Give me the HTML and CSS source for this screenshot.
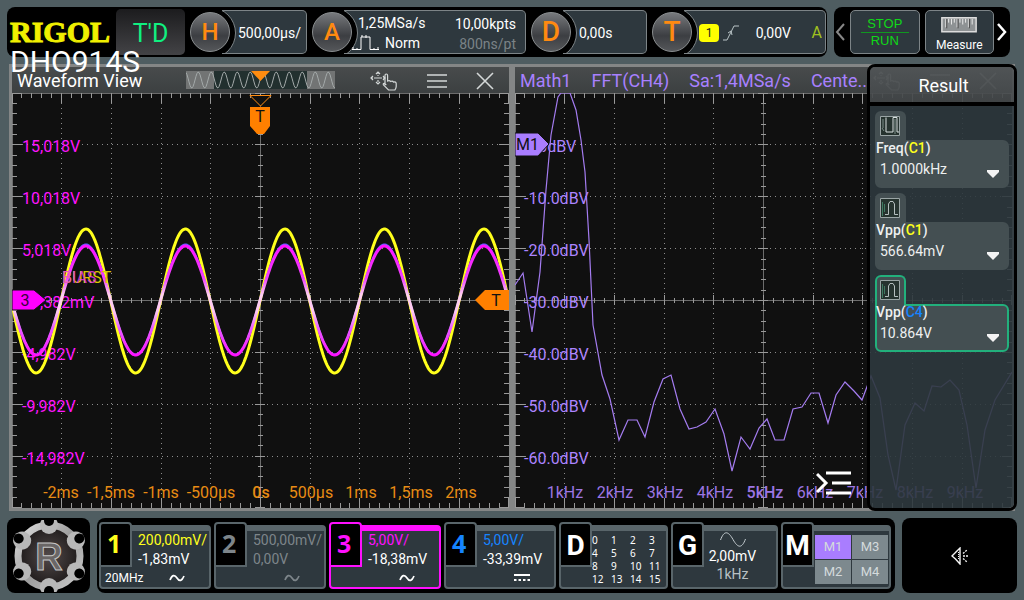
FILE: index.html
```html
<!DOCTYPE html>
<html lang="en">
<head>
<meta charset="utf-8">
<title>RIGOL DHO914S</title>
<link rel="stylesheet" href="styles.css">
</head>
<body>
<svg class="defs" aria-hidden="true">
  <symbol id="i-move" viewBox="0 0 28 20">
    <g fill="none" stroke="currentColor" stroke-width="1.2">
      <path d="M8 1v4M8 9v4M1 7h5M10 7h5" stroke-dasharray="2 1"/>
      <path d="M6 3l2-2 2 2M6 11l2 2 2-2M3 5L1 7l2 2M13 5l2 2-2 2M6 7h4"/>
      <path d="M15 14V4.500q0-1.500 1.300-1.500t1.300 1.500V10q2-1 3 .5 2-1 3 .6 2.400-.6 2.600 1.400v3q0 1.500-1.300 3.500H18.500l-5-5q-.8-1.500.8-1.700l2 1.700"/>
    </g>
  </symbol>
  <symbol id="i-menu" viewBox="0 0 20 16"><path d="M0 2h20M0 8h20M0 14h20" stroke="currentColor" stroke-width="1.600"/></symbol>
  <symbol id="i-close" viewBox="0 0 18 18"><path d="M1 1l16 16M17 1L1 17" stroke="currentColor" stroke-width="1.600"/></symbol>
  <symbol id="i-sine" viewBox="0 0 16 8"><path d="M1 6C3 1 5.500 0 8 4s5 3 7-2" fill="none" stroke="currentColor" stroke-width="1.700"/></symbol>
  <symbol id="i-vpp" viewBox="0 0 20 20">
    <path d="M.5.5h19v19H.5z" fill="#26332f" stroke="#9aa5a5"/>
    <path d="M5 16.500h3.500V6L10 3.500h3L14.500 6v10.500H18" fill="none" stroke="#b4bebe"/>
    <path d="M2.500 4v14M4.500 6v8" stroke="#3f7a62"/>
  </symbol>
  <symbol id="i-freq" viewBox="0 0 20 20">
    <path d="M.5.5h19v19H.5z" fill="#26332f" stroke="#9aa5a5"/>
    <path d="M6 1.500v14.500h7V1.500h4V16h2" fill="none" stroke="#d8e0e0"/>
    <path d="M2 12l2 3M3 3v9M15 3v15" stroke="#7d8f8a"/>
  </symbol>
</svg>

<header class="topbar">
  <div class="status">
    <div class="brand"><span class="brand-name">RIGOL</span><span class="brand-model">DHO914S</span></div>
    <div class="trig-state">T'D</div>
    <div class="module module-h">
      <button class="knob">H</button>
      <div class="readout"><span>500,00µs/</span></div>
    </div>
    <div class="module module-a">
      <button class="knob">A</button>
      <div class="readout acquire">
        <div class="acquire-left">
          <span class="rate">1,25MSa/s</span>
          <span class="mode"><svg width="28" height="16" viewBox="0 0 28 16" aria-hidden="true"><path d="M0 14.500h9V2h9v12.500h9" fill="none" stroke="#fff"/><path d="M1 12v2M5 13v2M10 0v2M14 0v3M22 13v2M26 12v2" stroke="#fff"/></svg>Norm</span>
        </div>
        <div class="acquire-right"><span>10,00kpts</span><span class="dim">800ns/pt</span></div>
      </div>
    </div>
    <div class="module module-d">
      <button class="knob knob-bold">D</button>
      <div class="readout"><span>0,00s</span></div>
    </div>
    <div class="module module-t">
      <button class="knob knob-bold">T</button>
      <div class="readout trigger">
        <span class="source">1</span>
        <svg width="16" height="18" viewBox="0 0 16 18" aria-hidden="true"><path d="M0 16h4L11 2h5M5 9l3-2 1 4" fill="none" stroke="#b9c3c6"/></svg>
        <span class="level">0,00V</span>
        <span class="sweep">A</span>
      </div>
    </div>
  </div>
  <nav class="quick">
    <button class="arrow arrow-off" aria-label="Previous"><svg width="10" height="18" viewBox="0 0 10 18"><path d="M9 1L2 9l7 8" fill="none" stroke="currentColor" stroke-width="2"/></svg></button>
    <button class="tool stoprun"><span class="stop">STOP</span><span>RUN</span></button>
    <button class="tool measure">
      <svg width="38" height="17" viewBox="0 0 38 17" aria-hidden="true"><path d="M.8.8h36.400v15H.8z" fill="#8e9294" stroke="#dcdcdc" stroke-width="1.600"/><path d="M5 2v9M8 2v4M11 2v6M14 2v4M17 2v9M20 2v4M23 2v6M26 2v4M29 2v9M33 2v6" stroke="#eee"/><path d="M6 2v10M18 2v10M30 2v10" stroke="#444"/></svg>
      <span>Measure</span>
    </button>
    <button class="arrow" aria-label="Next"><svg width="10" height="18" viewBox="0 0 10 18"><path d="M1 1l7 8-7 8" fill="none" stroke="currentColor" stroke-width="2.500"/></svg></button>
  </nav>
</header>

<main class="windows">
  <section class="window">
    <div class="titlebar">
      <h2 class="title">Waveform View</h2>
      <svg class="minimap" width="149" height="18" viewBox="0 0 149 18" aria-hidden="true">
        <path d="M0 0h149v18H0z" fill="#727474"/><path d="M28 0h93v18H28z" fill="#22302f"/>
        <path id="memory-trace" fill="none" stroke="#a4aaaa"/>
        <path d="M65 0h19l-9.500 10z" fill="#ff8c10"/>
      </svg>
      <div class="actions">
        <button aria-label="Move"><svg width="28" height="20"><use href="#i-move"/></svg></button>
        <button aria-label="Menu"><svg width="20" height="16"><use href="#i-menu"/></svg></button>
        <button aria-label="Close"><svg width="18" height="18"><use href="#i-close"/></svg></button>
      </div>
    </div>
    <svg class="plot" viewBox="12 93 497 415" role="img" aria-label="Waveform view">
      <defs>
        <linearGradient id="blend" gradientUnits="userSpaceOnUse" x1="0" y1="245" x2="0" y2="356">
          <stop offset="0" stop-color="#ff10ff"/><stop offset=".3" stop-color="#f040ff"/><stop offset=".45" stop-color="#ffd0f0"/>
          <stop offset=".6" stop-color="#ffc8f0"/><stop offset=".75" stop-color="#e85cff"/><stop offset="1" stop-color="#ff10ff"/>
        </linearGradient>
      </defs>
      <g id="grid-time"></g>
      <g id="labels-time"></g>
      <g fill="none" stroke-width="3">
        <path id="trace-c1" stroke="#ffff1c"/>
        <path id="trace-c4" stroke="#5a60ff" stroke-width="2"/>
        <path id="trace-c3" stroke="url(#blend)"/>
      </g>
      <text x="62" y="283" fill="#d8c800">BURST</text>
      <text x="62" y="283" fill="#f03cf0" opacity=".8">BIAS</text>
      <path d="M250 95.500h21L260.500 106z" fill="#111" stroke="#ff8c10"/>
      <path d="M250 107h20v19l-6 8h-7l-7-8z" fill="#ff8000"/>
      <text x="260" y="122" text-anchor="middle" fill="#111">T</text>
      <path d="M475 300l10-10h24v20h-24z" fill="#ff8000"/>
      <text x="496" y="306" text-anchor="middle" fill="#111">T</text>
      <path d="M12 290h22l12 10-12 10H12z" fill="#ff00ff" stroke="#111"/>
      <text x="25" y="306" text-anchor="middle" fill="#3a003a">3</text>
    </svg>
  </section>

  <section class="window">
    <div class="titlebar titlebar-math">
      <h2 class="math-info"><span>Math1</span><span>FFT(CH4)</span><span>Sa:1,4MSa/s</span><span>Cente...</span></h2>
      <div class="actions">
        <button aria-label="Move"><svg width="28" height="20"><use href="#i-move"/></svg></button>
        <button aria-label="Menu"><svg width="20" height="16"><use href="#i-menu"/></svg></button>
        <button aria-label="Close"><svg width="18" height="18"><use href="#i-close"/></svg></button>
      </div>
    </div>
    <svg class="plot" viewBox="515 93 497 415" role="img" aria-label="FFT of channel 4">
      <g id="grid-fft"></g>
      <g id="labels-fft"></g>
      <path id="trace-fft" fill="none" stroke="#a47cf0" stroke-width="1.200"/>
      <path d="M515 133h23l11 11-11 12h-23z" fill="#a97dff" stroke="#111"/>
      <text x="516" y="150" fill="#111">M1</text>
    </svg>
    <button class="fold" aria-label="Hide results"><svg width="36" height="26" viewBox="0 0 36 26"><path d="M1 4l9 9-9 9M10 3h25M16 13h19M10 23h25" fill="none" stroke="#fff" stroke-width="3"/></svg></button>
  </section>

  <aside class="results">
    <h2 class="results-title">Result</h2>
    <div class="results-list">
      <article class="result">
        <div class="result-tab"><svg width="20" height="20"><use href="#i-freq"/></svg></div>
        <div class="result-body"><h3>Freq(<b class="c1">C1</b>)</h3><div class="result-row"><span>1.0000kHz</span><button aria-label="Expand"></button></div></div>
      </article>
      <article class="result">
        <div class="result-tab"><svg width="20" height="20"><use href="#i-vpp"/></svg></div>
        <div class="result-body"><h3>Vpp(<b class="c1">C1</b>)</h3><div class="result-row"><span>566.64mV</span><button aria-label="Expand"></button></div></div>
      </article>
      <article class="result selected">
        <div class="result-tab"><svg width="20" height="20"><use href="#i-vpp"/></svg></div>
        <div class="result-body"><h3>Vpp(<b class="c4">C4</b>)</h3><div class="result-row"><span>10.864V</span><button aria-label="Expand"></button></div></div>
      </article>
    </div>
  </aside>
</main>

<footer class="bottombar">
  <button class="home" aria-label="Home">
    <svg width="72" height="72" viewBox="-36 -36 72 72">
      <defs>
        <linearGradient id="steel" gradientUnits="userSpaceOnUse" x1="-30" y1="-30" x2="30" y2="30"><stop offset="0" stop-color="#dcdcdc"/><stop offset=".5" stop-color="#9c9c9c"/><stop offset="1" stop-color="#c8c8c8"/></linearGradient>
        <radialGradient id="core"><stop offset="0" stop-color="#524a4a"/><stop offset="1" stop-color="#1e1a1a"/></radialGradient>
        <circle id="notch" cy="-31" r="9"/>
        <circle id="cut" cy="-35" r="5" fill="#000"/>
      </defs>
      <circle r="31" fill="url(#core)" stroke="url(#steel)" stroke-width="7"/>
      <g fill="#b8b8b8">
        <use href="#notch"/><use href="#notch" transform="rotate(60)"/><use href="#notch" transform="rotate(120)"/><use href="#notch" transform="rotate(180)"/><use href="#notch" transform="rotate(240)"/><use href="#notch" transform="rotate(300)"/>
      </g>
      <use href="#cut"/><use href="#cut" transform="rotate(60)"/><use href="#cut" transform="rotate(120)"/><use href="#cut" transform="rotate(180)"/><use href="#cut" transform="rotate(240)"/><use href="#cut" transform="rotate(300)"/>
      <text class="home-letter" y="14" text-anchor="middle">R</text>
    </svg>
  </button>

  <div class="channels">
    <button class="channel c1-card">
      <span class="tile">1</span>
      <span class="info"><span class="c1">200,00mV/</span><span>-1,83mV</span></span>
      <span class="foot"><span>20MHz</span><svg width="16" height="8"><use href="#i-sine"/></svg></span>
    </button>
    <button class="channel off">
      <span class="tile">2</span>
      <span class="info"><span>500,00mV/</span><span>0,00V</span></span>
      <span class="foot"><span></span><svg width="16" height="8"><use href="#i-sine"/></svg></span>
    </button>
    <button class="channel active">
      <span class="tile">3</span>
      <span class="info"><span class="c3">5,00V/</span><span>-18,38mV</span></span>
      <span class="foot"><span></span><svg width="16" height="8"><use href="#i-sine"/></svg></span>
    </button>
    <button class="channel c4-card">
      <span class="tile">4</span>
      <span class="info"><span class="c4">5,00V/</span><span>-33,39mV</span></span>
      <span class="foot"><span></span><svg width="16" height="8" viewBox="0 0 16 8"><path d="M0 1h16" stroke="#fff" stroke-width="2"/><path d="M0 6h16" stroke="#fff" stroke-width="2" stroke-dasharray="2.500 2"/></svg></span>
    </button>
    <button class="channel letter">
      <span class="tile">D</span>
      <span class="digital"><span>0</span><span>1</span><span>2</span><span>3</span><span>4</span><span>5</span><span>6</span><span>7</span><span>8</span><span>9</span><span>10</span><span>11</span><span>12</span><span>13</span><span>14</span><span>15</span></span>
    </button>
    <button class="channel letter">
      <span class="tile">G</span>
      <span class="generator"><svg width="26" height="15" viewBox="0 0 26 15" aria-hidden="true"><path d="M.5 8C4-1.500 8-1.500 13 7.500s9 9 12.500-.5" fill="none" stroke="#c4ccd0"/></svg><span>2,00mV</span><span class="freq">1kHz</span></span>
    </button>
    <button class="channel letter">
      <span class="tile">M</span>
      <span class="math"><span class="on">M1</span><span>M3</span><span>M2</span><span>M4</span></span>
    </button>
  </div>

  <button class="sound" aria-label="Sound">
    <svg width="18" height="18" viewBox="0 0 18 18"><g fill="none" stroke="#f4f4f4"><path d="M9 1v16L4.500 12 1 9l3.500-3.500z" stroke-width="1.400"/><path d="M7.500 5v8" stroke-dasharray="1 1"/><path d="M12 9h5M12 6.500L16 3M12 11.500l4 3.500" stroke-dasharray="2 1" stroke-width="1.300"/></g></svg>
  </button>
</footer>
<script src="script.js"></script>
</body>
</html>
```

FILE: styles.css
```css
* { box-sizing: border-box; }

body {
  margin: 0;
  padding: 7px;
  background: #4f5d61;
  color: #fff;
  font: 14px/18px Roboto, sans-serif;
  min-width: 960px;
}

button {
  margin: 0;
  padding: 0;
  border: 0;
  background: none;
  color: inherit;
  font: inherit;
}

h2, h3 { margin: 0; font-weight: 400; }
svg { display: block; }
.defs { position: absolute; width: 0; height: 0; }

.c1 { color: #ffff1c; }
.c3 { color: #ff10ff; }
.c4 { color: #1684ff; }

/* Top bar */
.topbar { display: flex; gap: 7px; height: 50px; padding-right: 7px; }

.status {
  flex: 1;
  display: flex;
  gap: 5px;
  padding: 2px 1px 2px 3px;
  background: #000;
  border-radius: 8px;
}

.brand { position: relative; flex: 0 0 101px; min-width: 0; display: flex; align-items: center; }
.brand-name {
  font: bold 30px/46px "Liberation Serif", serif;
  color: #f0f000;
  -webkit-text-stroke: 1px #f0f000;
}
.brand-model {
  position: absolute;
  left: 0;
  top: 35px;
  z-index: 2;
  font-size: 30px;
  line-height: 36px;
}

.trig-state {
  flex: 0 0 69px;
  display: grid;
  place-items: center;
  padding-top: 3px;
  border-radius: 5px;
  background: linear-gradient(#1c1c1e, #434346);
  color: #10f080;
  font-size: 25px;
}

.module { display: flex; align-items: center; }
.module-h { flex: 117 1 117px; }
.module-a { flex: 214 1 214px; }
.module-d { flex: 116 1 116px; }
.module-t { flex: 174 1 174px; }

.knob {
  position: relative;
  z-index: 1;
  flex: 0 0 40px;
  height: 40px;
  border: 1px solid #8a8e90;
  border-radius: 50%;
  background: linear-gradient(#77797c, #3c3e42 60%, #55575a);
  color: #ff8a10;
  font-size: 24px;
  font-weight: 500;
}
.knob-bold { font-size: 28px; }

.readout {
  position: relative;
  flex: 1;
  align-self: stretch;
  display: flex;
  align-items: center;
  margin: 1px 0 1px -8px;
  padding: 2px 0 0 16px;
  border: 1px solid #7d8487;
  border-left: 0;
  border-radius: 0 5px 5px 0;
  background: #2e383e;
  overflow: hidden;
  white-space: nowrap;
}
.readout::before {
  content: "";
  position: absolute;
  left: -38px;
  top: -4px;
  width: 50px;
  height: 50px;
  border: 1px solid #7d8487;
  border-radius: 50%;
  background: #000;
}
.acquire { justify-content: space-between; padding: 2px 9px 0 8px; }
.acquire > div { position: relative; display: flex; flex-direction: column; gap: 2px; }
.acquire-right { padding-top: 2px; text-align: right; }
.rate { padding-left: 6px; }
.mode { display: flex; align-items: center; gap: 5px; }
.dim { color: #7b8387; }

.trigger { gap: 4px; padding: 2px 3px 0 15px; }
.source {
  width: 20px;
  border-radius: 4px;
  background: #ffff00;
  color: #222;
  font-size: 12px;
  text-align: center;
}
.level { flex: 1; padding-right: 4px; text-align: center; }
.sweep { color: #a0c020; font-size: 16px; }

.quick {
  flex: 0 0 176px;
  display: flex;
  align-items: center;
  padding: 3px 1px;
  gap: 5px;
  border-radius: 8px;
  background: #000;
}
.arrow { width: 10px; margin: 0 2px 0 -2px; }
.arrow-off { margin: 0; color: #888; }
.tool {
  flex: 1;
  align-self: stretch;
  display: flex;
  flex-direction: column;
  align-items: center;
  justify-content: center;
  border: 1px solid #7d8487;
  border-radius: 5px;
  background: #2e383e;
}
.stoprun { color: #10d818; font: 13px/16px "Liberation Sans", sans-serif; }
.stop { width: 48px; border-bottom: 1px solid #109820; }
.measure { gap: 4px; font-size: 12px; line-height: 16px; }
.measure svg { margin-top: 6px; }

/* Waveform windows */
.windows {
  position: relative;
  display: grid;
  grid-template-columns: 1fr 1fr;
  gap: 6px;
  margin: 7px 2px 7px;
  padding: 3px;
  background: #848686;
}
.window { position: relative; min-width: 0; }
.titlebar {
  display: flex;
  align-items: center;
  height: 26px;
  padding: 2px 15px 0 5px;
  background: linear-gradient(#484b4c, #3c4041);
}
.title { flex: 0 0 169px; font-size: 18px; }
.minimap { margin-top: -2px; }
.actions { display: flex; align-items: center; gap: 29px; margin-left: auto; color: #d4d8d8; }
.titlebar-math { color: #a880ff; font-size: 18px; }
.math-info { display: flex; gap: 20px; font-size: 18px; white-space: nowrap; }
.titlebar-math .actions { color: #a8acac; }

.plot { width: 100%; height: auto; background: #101010; font-size: 16px; }
.fold { position: absolute; right: 160px; bottom: 12px; }

/* Result panel */
.results {
  position: absolute;
  top: 0;
  right: -2px;
  bottom: 0;
  width: 150px;
  border: 3px solid #000;
  border-radius: 8px;
  overflow: hidden;
}
.results-title {
  height: 39px;
  padding-left: 3px;
  border-bottom: 4px solid #000;
  background: linear-gradient(rgba(80, 84, 86, .92), rgba(68, 72, 74, .92)) padding-box;
  font-size: 18px;
  line-height: 37px;
  text-align: center;
}
.results-list {
  height: 100%;
  padding: 5px 5px 0 5px;
  background: rgba(46, 56, 62, .9);
}
.result { margin-bottom: 5px; --card: #444f52; --edge: #444f52; }
.result.selected { --edge: #22b07c; }
.result-tab {
  position: relative;
  width: 31px;
  height: 31px;
  margin-bottom: -2px;
  padding: 3px;
  border: 2px solid var(--edge);
  border-bottom: 0;
  border-radius: 6px 6px 0 0;
  background: var(--card);
}
.result-body {
  height: 48px;
  border: 2px solid var(--edge);
  border-radius: 0 6px 6px 6px;
  background: var(--card);
  color: #eef0f0;
}
.result h3 { position: relative; margin: -4px 0 0 -1px; font-size: 14px; font-weight: 500; line-height: 20px; }
.result b { font-weight: 500; }
.result-row { display: flex; justify-content: space-between; padding: 2px 8px 0 3px; line-height: 19px; }
.result-row button {
  width: 12px;
  height: 8px;
  margin-top: 10px;
  background: #f4f4f4;
  clip-path: polygon(0 0, 100% 0, 100% 25%, 50% 100%, 0 25%);
}

/* Bottom bar */
.bottombar { display: flex; gap: 7px; height: 75px; }
.home {
  flex: 0 0 83px;
  display: grid;
  place-items: center;
  border-radius: 8px;
  background: #000;
}
.home-letter {
  fill: #6a6666;
  stroke: #c4c4c4;
  stroke-width: 1px;
  font: bold 38px "Liberation Sans", sans-serif;
}
.sound {
  flex: 0 0 115px;
  display: grid;
  place-items: center;
  border-radius: 8px;
  background: #000;
}
.channels {
  flex: 1;
  display: grid;
  grid-template-columns: 112fr 112fr 112fr 112fr 109fr 107fr 110fr;
  gap: 3px;
  padding: 4px 4px 4px 2px;
  border-radius: 8px;
  background: #000;
}
.channel {
  --edge: #59656a;
  --ink: #fff;
  display: grid;
  grid-template-columns: 33px 1fr;
  grid-template-rows: 45px 1fr;
  text-align: left;
  white-space: nowrap;
}
.channel::before {
  content: "";
  grid-area: 1 / 1 / 3 / 3;
  margin-top: 3px;
  border: 2px solid var(--edge);
  border-top-width: 6px;
  border-radius: 4px;
  background: #2e383e;
}
.tile {
  grid-area: 1 / 1;
  border: 2px solid var(--edge);
  border-radius: 4px 4px 0 0;
  background: #000;
  color: var(--ink);
  font: bold 25px/38px "Noto Sans", sans-serif;
  padding-left: 6px;
}
.letter .tile {
  padding: 0;
  font: bold 28px/43px Roboto, sans-serif;
  text-align: center;
}
.c1-card { --ink: #ffff1c; }
.off { --ink: #7d858a; color: #7d858a; }
.active { --edge: #ff10ff; --ink: #ff10ff; }
.c4-card { --ink: #1684ff; }
.info {
  grid-area: 1 / 2;
  display: flex;
  flex-direction: column;
  padding: 9px 0 0 6px;
  line-height: 19px;
}
.foot {
  grid-area: 2 / 1 / 3 / 3;
  display: flex;
  align-items: center;
  justify-content: space-between;
  padding: 2px 26px 2px 6px;
  font-size: 12px;
}
.digital {
  grid-area: 1 / 2 / 3 / 3;
  display: grid;
  grid-template-columns: repeat(4, 19px);
  grid-auto-rows: 13px;
  padding-top: 12px;
  font: 10px/13px "Noto Sans", sans-serif;
}
.generator {
  grid-area: 1 / 1 / 3 / 3;
  display: flex;
  flex-direction: column;
  align-items: center;
  padding: 10px 0 0 16px;
}
.freq { color: #b8c0c4; }
.math {
  grid-area: 1 / 2 / 3 / 3;
  display: grid;
  grid-template: 24px 24px / 1fr 1fr;
  gap: 1px;
  margin: 13px 3px 0 1px;
  font-size: 13px;
  line-height: 24px;
  text-align: center;
  color: #d4dadc;
}
.math span { background: #7d898e; }
.math .on { background: #a97dff; }
```

FILE: script.js
```js
const NS = "http://www.w3.org/2000/svg";

function add(parent, name, attrs, text) {
  const el = document.createElementNS(NS, name);
  for (const key in attrs) el.setAttribute(key, attrs[key]);
  if (text) el.textContent = text;
  parent.appendChild(el);
}

// Graticule: 10 x 8 divisions, five minor ticks in each.
function drawGrid(id, left) {
  const g = document.getElementById(id);
  const w = 497, h = 415, top = 93, dx = w / 10, dy = h / 8;
  const cx = left + w / 2, cy = top + h / 2, right = left + w, bottom = top + h;
  let dots = "", ticks = "";
  for (let i = 1; i < 10; i++) dots += `M${Math.floor(left + i * dx)}.5 ${top}V${bottom}`;
  for (let i = 1; i < 8; i++) dots += `M${left} ${Math.floor(top + i * dy)}.5H${right}`;
  for (let i = 0; i <= 50; i++) {
    const x = Math.min(Math.floor(left + i * dx / 5), right - 1) + 0.5, n = i % 5 === 0 ? 10 : 5;
    ticks += `M${x} ${top}v${n}M${x} ${bottom}v${-n}M${x} ${Math.floor(cy - n / 2)}v${n}`;
  }
  for (let i = 0; i <= 40; i++) {
    const y = Math.min(Math.floor(top + i * dy / 5), bottom - 1) + 0.5, n = i % 5 === 0 ? 10 : 5;
    ticks += `M${left} ${y}h${n}M${right} ${y}h${-n}M${Math.floor(cx - n / 2)} ${y}h${n}`;
  }
  add(g, "path", { d: dots, stroke: "#8c8c8c", "stroke-dasharray": "1 4", fill: "none" });
  add(g, "path", { d: `M${cx} ${top}V${bottom}M${left} ${cy}H${right}M${left} ${top + 0.5}H${right}M${left + 0.5} ${top}V${bottom}`, stroke: "#6c6c6c", fill: "none" });
  add(g, "path", { d: ticks, stroke: "#999", fill: "none" });
}

function sine(x0, x1, zero, period, mid, amp) {
  let d = "";
  for (let x = x0; x <= x1; x++) {
    d += (d ? "L" : "M") + x + " " + (mid - amp * Math.sin((x - zero) / period * 2 * Math.PI)).toFixed(1);
  }
  return d;
}

drawGrid("grid-time", 12);
drawGrid("grid-fft", 515);

const time = document.getElementById("labels-time");
["15,018V", "10,018V", "5,018V", "17,382mV", "-4,982V", "-9,982V", "-14,982V"].forEach((t, i) =>
  add(time, "text", { x: 22, y: 152 + i * 52, fill: "#ff14ff" }, t));
["-2ms", "-1,5ms", "-1ms", "-500µs", "0s", "500µs", "1ms", "1,5ms", "2ms"].forEach((t, i) =>
  add(time, "text", { x: 61 + i * 50, y: 498, fill: "#e88c14", "text-anchor": "middle", "font-weight": i === 4 ? 500 : 400 }, t));

const fft = document.getElementById("labels-fft");
["0.0dBV", "-10.0dBV", "-20.0dBV", "-30.0dBV", "-40.0dBV", "-50.0dBV", "-60.0dBV"].forEach((t, i) =>
  add(fft, "text", { x: i ? 524 : 525, y: 152 + i * 52, fill: "#ac84ff" }, t));
for (let k = 1; k < 10; k++) {
  add(fft, "text", { x: 515 + k * 50, y: 498, fill: "#9c76e4", "text-anchor": "middle", "font-weight": k === 5 ? 500 : 400 }, k + "kHz");
}

document.getElementById("trace-c1").setAttribute("d", sine(12, 509, 260, 99.5, 301, 72));
document.getElementById("trace-c4").setAttribute("d", sine(12, 509, 260, 99.5, 299.5, 55));
document.getElementById("trace-c3").setAttribute("d", sine(12, 509, 260, 99.5, 300.5, 54.5));
document.getElementById("memory-trace").setAttribute("d", sine(0, 149, 74, 13, 9, 8));

const spectrum = [
  [515, 285], [523, 273], [532, 332], [540, 272], [546, 190], [551, 135], [558, 97], [561, 93], [570, 93],
  [576, 110], [581, 140], [585, 172], [589, 240], [593, 325], [602, 375], [610, 399], [619, 440],
  [628, 420], [637, 420], [645, 437], [654, 402], [663, 379], [671, 375], [680, 409], [689, 429],
  [697, 427], [706, 422], [715, 409], [724, 434], [732, 471], [741, 437], [750, 449], [759, 428],
  [767, 419], [775, 440], [784, 440], [793, 409], [802, 407], [811, 393], [819, 393], [828, 423],
  [836, 395], [845, 382], [854, 391], [862, 400], [871, 376], [880, 398], [888, 455], [896, 490],
  [905, 425], [915, 403], [924, 411], [932, 386], [941, 387], [950, 380], [959, 390], [967, 425],
  [976, 488], [985, 430], [995, 400], [1012, 372]
];
document.getElementById("trace-fft").setAttribute("d", "M" + spectrum.map(p => p.join(" ")).join("L"));
```
